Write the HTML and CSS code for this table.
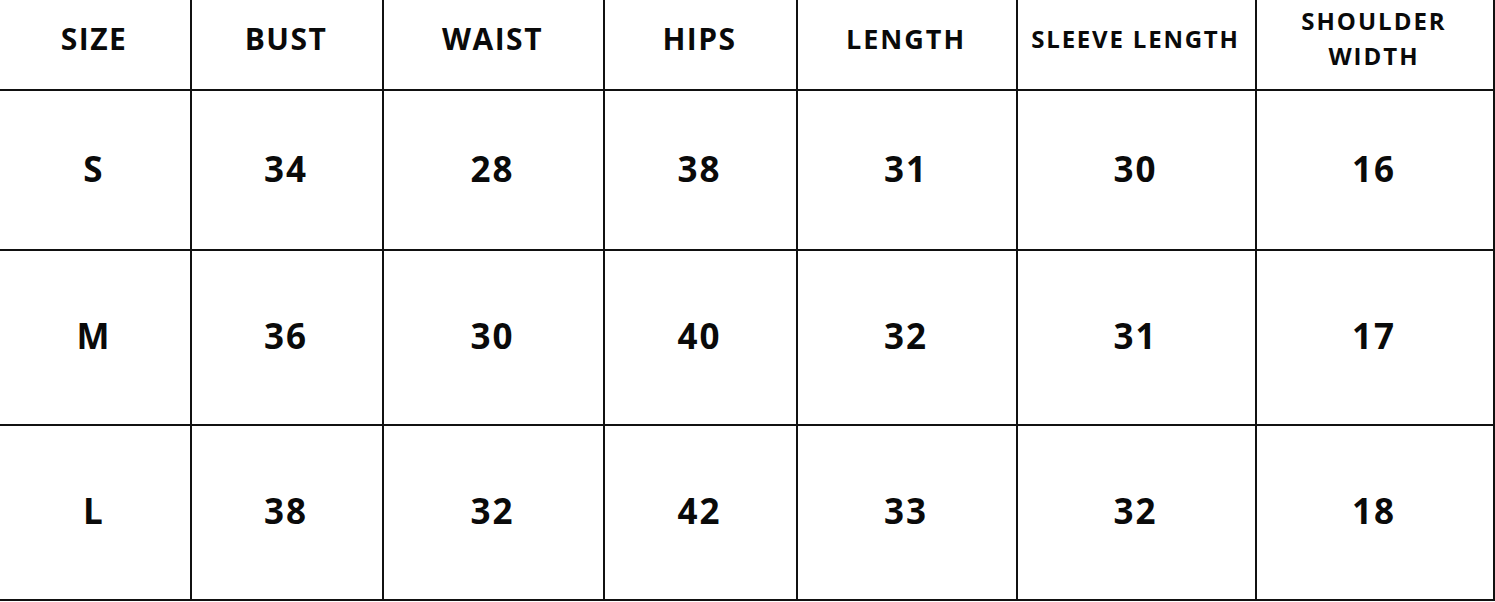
FILE: index.html
```html
<!DOCTYPE html>
<html>
<head>
<meta charset="utf-8">
<link rel="stylesheet" href="styles.css">
</head>
<body>
<div class="chart">
  <div class="cell head">SIZE</div>
  <div class="cell head">BUST</div>
  <div class="cell head">WAIST</div>
  <div class="cell head">HIPS</div>
  <div class="cell head mid">LENGTH</div>
  <div class="cell head small">SLEEVE LENGTH</div>
  <div class="cell head two">SHOULDER<br>WIDTH</div>

  <div class="cell">S</div>
  <div class="cell">34</div>
  <div class="cell">28</div>
  <div class="cell">38</div>
  <div class="cell">31</div>
  <div class="cell">30</div>
  <div class="cell">16</div>

  <div class="cell">M</div>
  <div class="cell">36</div>
  <div class="cell">30</div>
  <div class="cell">40</div>
  <div class="cell">32</div>
  <div class="cell">31</div>
  <div class="cell">17</div>

  <div class="cell">L</div>
  <div class="cell">38</div>
  <div class="cell">32</div>
  <div class="cell">42</div>
  <div class="cell">33</div>
  <div class="cell">32</div>
  <div class="cell">18</div>
</div>
</body>
</html>
```

FILE: styles.css
```css
html, body {
  margin: 0;
  padding: 0;
  background: #fff;
}
.chart {
  display: grid;
  width: 1495px;
  grid-template-columns: 192px 192px 221px 193px 220px 239px 238px;
  grid-template-rows: 91px 160px 175px 175px;
  font-family: "Open Sans", "Liberation Sans", sans-serif;
  font-weight: 700;
  color: #0a0a0a;
}
.cell {
  display: flex;
  align-items: center;
  justify-content: center;
  text-align: center;
  border-right: 2px solid #111;
  border-bottom: 2px solid #111;
  font-size: 35px;
  letter-spacing: 2px;
  padding-bottom: 4px;
  padding-right: 2px;
}
.head {
  font-size: 30px;
  letter-spacing: 1.5px;
  padding-bottom: 12px;
}
.head.mid {
  font-size: 27px;
  letter-spacing: 2px;
}
.head.small {
  font-size: 24px;
  letter-spacing: 1.8px;
}
.head.two {
  font-size: 24px;
  letter-spacing: 2px;
  line-height: 35px;
  padding-bottom: 14px;
}
```
